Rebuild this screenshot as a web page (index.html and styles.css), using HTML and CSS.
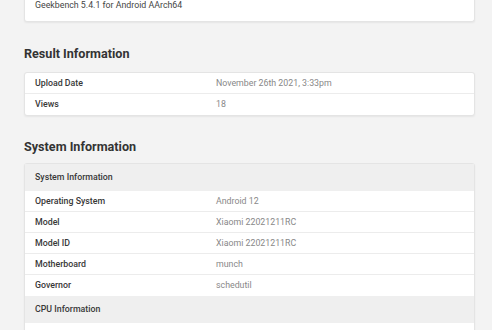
FILE: index.html
```html
<!DOCTYPE html>
<html lang="en">
<head>
    <meta charset="UTF-8">
    <meta name="viewport" content="width=device-width, initial-scale=1.0">
    <title>Geekbench Result</title>
    <link rel="stylesheet" href="styles.css">
</head>
<body>
    <main class="pagina">
        <!-- Versione -->
        <div class="scheda scheda-top">
            <div class="riga"><span class="etichetta-lunga">Geekbench 5.4.1 for Android AArch64</span></div>
        </div>

        <!-- Result Information -->
        <h2>Result Information</h2>
        <div class="scheda">
            <div class="riga"><span class="etichetta">Upload Date</span><span class="valore">November 26th 2021, 3:33pm</span></div>
            <div class="riga"><span class="etichetta">Views</span><span class="valore">18</span></div>
        </div>

        <!-- System Information -->
        <h2 class="titolo-sistema">System Information</h2>
        <div class="scheda">
            <div class="riga intestazione"><span class="etichetta">System Information</span></div>
            <div class="riga"><span class="etichetta">Operating System</span><span class="valore">Android 12</span></div>
            <div class="riga"><span class="etichetta">Model</span><span class="valore">Xiaomi 22021211RC</span></div>
            <div class="riga"><span class="etichetta">Model ID</span><span class="valore">Xiaomi 22021211RC</span></div>
            <div class="riga"><span class="etichetta">Motherboard</span><span class="valore">munch</span></div>
            <div class="riga"><span class="etichetta">Governor</span><span class="valore">schedutil</span></div>
            <div class="riga intestazione"><span class="etichetta">CPU Information</span></div>
            <div class="riga"><span class="etichetta">&nbsp;</span></div>
        </div>
    </main>
</body>
</html>
```

FILE: styles.css
```css
/* Stile globale */
body {
    font-family: Roboto, "Liberation Sans", sans-serif;
    margin: 0;
    padding: 0;
    background-color: #f3f3f3;
    color: #333;
}
.pagina {
    margin-left: 24px;
    width: 451px;
}
h2 {
    font-size: 12.6px;
    font-weight: 700;
    color: #333;
    line-height: 18px;
    margin: 23px 0 9px;
}
.titolo-sistema {
    margin-top: 22px;
    margin-bottom: 7px;
}
.scheda {
    background-color: white;
    border: 1px solid #e4e4e4;
    border-radius: 3px;
    box-shadow: 0 1px 2px rgba(0, 0, 0, 0.06);
}
.scheda-top {
    margin-top: -5px;
    padding-bottom: 6px;
    border-top: none;
}
.riga {
    display: grid;
    grid-template-columns: 181px 1fr;
    align-items: center;
    height: 20.2px;
    padding-left: 10px;
    font-size: 8.8px;
    border-top: 1px solid #ececec;
}
.riga:first-child {
    border-top: none;
}
.intestazione {
    height: 27px;
    background-color: #efefef;
    border-top: none;
}
.intestazione + .riga {
    border-top: none;
}
.etichetta {
    font-weight: 500;
    color: #383838;
}
.etichetta-lunga {
    grid-column: 1 / 3;
    color: #444;
}
.valore {
    color: #888;
}
```
